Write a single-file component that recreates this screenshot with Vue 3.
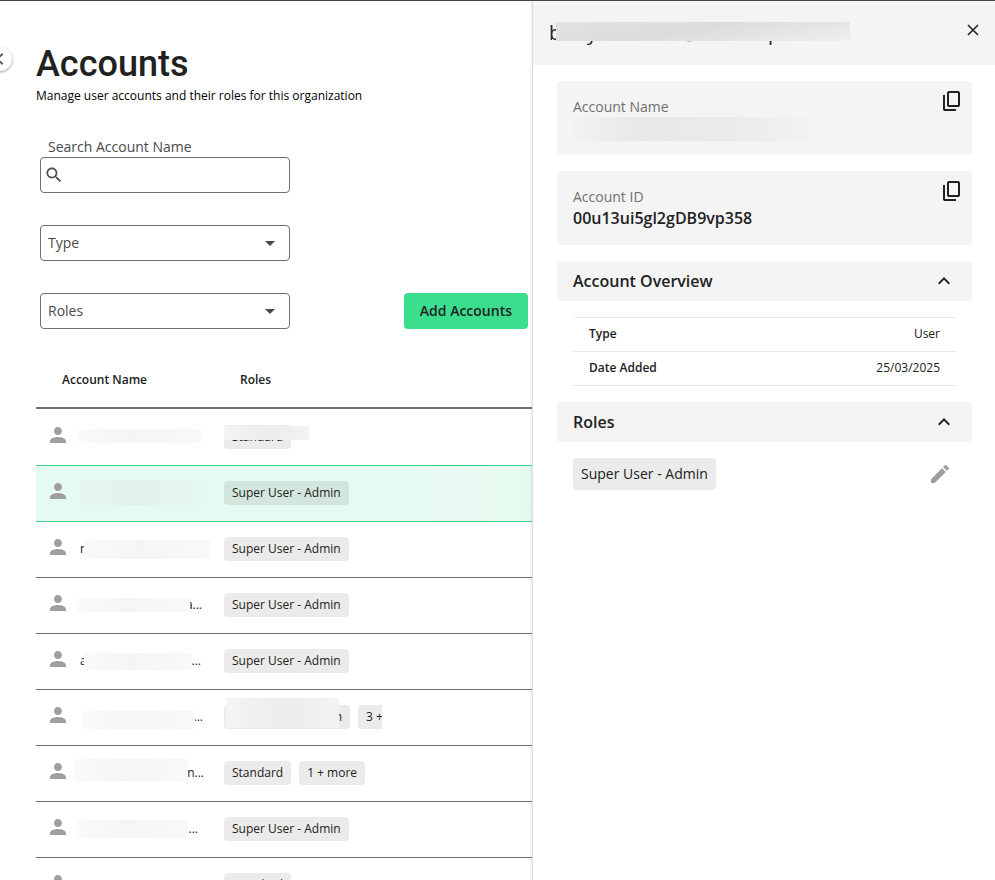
<script setup>
import { ref } from 'vue'

const searchText = ref('')
const typeFilter = ref('')
const roleFilter = ref('')
const overviewOpen = ref(true)
const rolesOpen = ref(true)

// names are private: only the edges of each one are shown around a cover
const accounts = ref([
  { id: 1, lead: '', tail: '', width: 122, cover: { left: -2, top: 0, width: 123, height: 14 }, roles: ['Standard'], roleCover: { left: 0, top: 1, width: 85, height: 14 } },
  { id: 2, lead: '', tail: '', width: 122, cover: { left: 1, top: -5, width: 121, height: 25 }, roles: ['Super User - Admin'] },
  { id: 3, lead: 'n', tail: '', width: 122, cover: { left: 4, top: -1, width: 126, height: 19 }, roles: ['Super User - Admin'] },
  { id: 4, lead: '', tail: 'a...', width: 122, cover: { left: -3, top: 1, width: 113, height: 14 }, roles: ['Super User - Admin'] },
  { id: 5, lead: 'a', tail: '...', width: 121, cover: { left: 4, top: 0, width: 108, height: 17 }, roles: ['Super User - Admin'] },
  { id: 6, lead: '', tail: '...', width: 123, cover: { left: 1, top: 2, width: 114, height: 18 }, roles: ['n', '3 + more'], roleCover: { left: 2, top: -7, width: 113, height: 30 } },
  { id: 7, lead: '', tail: 'n...', width: 124, cover: { left: -6, top: -6, width: 114, height: 22 }, roles: ['Standard', '1 + more'] },
  { id: 8, lead: '', tail: '...', width: 118, cover: { left: -3, top: -1, width: 111, height: 18 }, roles: ['Super User - Admin'] },
  { id: 9, lead: '', tail: '', width: 122, roles: ['Standard'] }
])

const selectedId = ref(2)

const details = [
  { label: 'Type', value: 'User' },
  { label: 'Date Added', value: '25/03/2025' }
]

function toBox(cover) {
  return {
    left: cover.left + 'px',
    top: cover.top + 'px',
    width: cover.width + 'px',
    height: cover.height + 'px'
  }
}
</script>

<template>
  <div class="app">
    <main class="page">
      <button class="collapse-btn" aria-label="Collapse menu">
        <svg viewBox="0 0 24 24"><path d="M15.41 7.41 14 6l-6 6 6 6 1.41-1.41L10.83 12z" /></svg>
      </button>

      <h1>Accounts</h1>
      <p class="subtitle">Manage user accounts and their roles for this organization</p>

      <div class="toolbar">
        <div class="filters">
          <div class="search">
            <label for="search">Search Account Name</label>
            <div class="search-box">
              <svg viewBox="0 0 24 24"><path d="M15.5 14h-.79l-.28-.27C15.41 12.59 16 11.11 16 9.5 16 5.91 13.09 3 9.5 3S3 5.91 3 9.5 5.91 16 9.5 16c1.61 0 3.09-.59 4.23-1.57l.27.28v.79l5 4.99L20.49 19zm-6 0C7.01 14 5 11.99 5 9.5S7.01 5 9.5 5 14 7.01 14 9.5 11.99 14 9.5 14" /></svg>
              <input id="search" v-model="searchText" type="text" />
            </div>
          </div>
          <div class="select-box">
            <select v-model="typeFilter" aria-label="Type">
              <option value="">Type</option>
            </select>
            <svg viewBox="0 0 24 24"><path d="m7 10 5 5 5-5z" /></svg>
          </div>
          <div class="select-box">
            <select v-model="roleFilter" aria-label="Roles">
              <option value="">Roles</option>
            </select>
            <svg viewBox="0 0 24 24"><path d="m7 10 5 5 5-5z" /></svg>
          </div>
        </div>
        <button class="add-btn">Add Accounts</button>
      </div>

      <table class="accounts">
        <thead>
          <tr>
            <th class="name-col">Account Name</th>
            <th class="roles-col">Roles</th>
          </tr>
        </thead>
        <tbody>
          <tr
            v-for="account in accounts"
            :key="account.id"
            :class="{ selected: account.id === selectedId }"
            @click="selectedId = account.id"
          >
            <td>
              <div class="account-cell">
                <svg class="person" viewBox="0 0 24 24"><path d="M12 12c2.21 0 4-1.79 4-4s-1.79-4-4-4-4 1.79-4 4 1.79 4 4 4m0 2c-2.67 0-8 1.34-8 4v2h16v-2c0-2.66-5.33-4-8-4" /></svg>
                <div class="name" :style="{ width: account.width + 'px' }">
                  <span>{{ account.lead }}</span>
                  <span>{{ account.tail }}</span>
                  <i v-if="account.cover" class="cover" :style="toBox(account.cover)"></i>
                </div>
              </div>
            </td>
            <td>
              <div class="role-cell">
                <div class="role-list">
                  <span v-for="role in account.roles" :key="role" :class="['chip', { wide: role === 'n' }]">{{ role }}</span>
                </div>
                <i v-if="account.roleCover" class="cover role-cover" :style="toBox(account.roleCover)"></i>
              </div>
            </td>
          </tr>
        </tbody>
      </table>
    </main>

    <aside class="drawer">
      <header class="drawer-header">
        <h2 class="drawer-title">
          <span>b</span><span>y</span><span>@</span><span>p</span>
          <i class="title-cover"></i>
        </h2>
        <button class="icon-btn" aria-label="Close">
          <svg viewBox="0 0 24 24"><path class="line" d="M7 7l10 10M17 7 7 17" /></svg>
        </button>
      </header>

      <div class="drawer-body">
        <section class="card">
          <div class="card-text">
            <span class="card-label">Account Name</span>
            <div class="value-cover"></div>
          </div>
          <button class="icon-btn" aria-label="Copy account name">
            <svg viewBox="0 0 24 24"><path d="M9 18q-.825 0-1.412-.587T7 16V4q0-.825.588-1.412T9 2h9q.825 0 1.413.588T20 4v12q0 .825-.587 1.413T18 18zm0-2h9V4H9zm-4 6q-.825 0-1.412-.587T3 20V6h2v14h11v2z" /></svg>
          </button>
        </section>

        <section class="card">
          <div class="card-text">
            <span class="card-label">Account ID</span>
            <strong class="card-value">00u13ui5gl2gDB9vp358</strong>
          </div>
          <button class="icon-btn" aria-label="Copy account ID">
            <svg viewBox="0 0 24 24"><path d="M9 18q-.825 0-1.412-.587T7 16V4q0-.825.588-1.412T9 2h9q.825 0 1.413.588T20 4v12q0 .825-.587 1.413T18 18zm0-2h9V4H9zm-4 6q-.825 0-1.412-.587T3 20V6h2v14h11v2z" /></svg>
          </button>
        </section>

        <button class="section-btn" :aria-expanded="overviewOpen" @click="overviewOpen = !overviewOpen">
          Account Overview
          <svg :class="{ closed: !overviewOpen }" viewBox="0 0 24 24"><path d="m12 8-6 6 1.41 1.41L12 10.83l4.59 4.58L18 14z" /></svg>
        </button>
        <table v-if="overviewOpen" class="details">
          <tbody>
            <tr v-for="item in details" :key="item.label">
              <th scope="row">{{ item.label }}</th>
              <td>{{ item.value }}</td>
            </tr>
          </tbody>
        </table>

        <button class="section-btn" :aria-expanded="rolesOpen" @click="rolesOpen = !rolesOpen">
          Roles
          <svg :class="{ closed: !rolesOpen }" viewBox="0 0 24 24"><path d="m12 8-6 6 1.41 1.41L12 10.83l4.59 4.58L18 14z" /></svg>
        </button>
        <div v-if="rolesOpen" class="role-row">
          <span class="chip large">Super User - Admin</span>
          <button class="icon-btn edit" aria-label="Edit roles">
            <svg viewBox="0 0 24 24"><path d="M3 17.25V21h3.75L17.81 9.94l-3.75-3.75zM20.71 7.04c.39-.39.39-1.02 0-1.41l-2.34-2.34a.996.996 0 0 0-1.41 0l-1.83 1.83 3.75 3.75z" /></svg>
          </button>
        </div>
      </div>
    </aside>
  </div>
</template>

<style>
body {
  margin: 0;
  background: #fff;
}
</style>

<style scoped>
* {
  box-sizing: border-box;
}

.app {
  display: grid;
  grid-template-columns: minmax(0, 1fr) 463px;
  height: 100vh;
  overflow: hidden;
  border-top: 1px solid #454345;
  font-family: "Open Sans", "Noto Sans", sans-serif;
  font-size: 12px;
  line-height: 16px;
  color: #212121;
}

button,
input,
select {
  font: inherit;
  color: inherit;
}

button {
  border: 0;
  padding: 0;
  background: none;
  cursor: pointer;
}

svg {
  display: block;
  flex: none;
  width: 24px;
  height: 24px;
  fill: currentColor;
}

/* left side */
.page {
  position: relative;
  padding: 41px 0 0 36px;
  overflow: hidden;
}

.collapse-btn {
  position: absolute;
  left: -12px;
  top: 46px;
  width: 24px;
  height: 24px;
  border-radius: 50%;
  background: #fff;
  color: #616161;
  box-shadow: 0 1px 3px rgba(0, 0, 0, 0.4);
}

h1 {
  margin: 0;
  font-family: Roboto, sans-serif;
  font-size: 36px;
  font-weight: 500;
  line-height: 44px;
}

.subtitle {
  margin: 2px 0 33px;
  color: #000;
}

.toolbar {
  display: flex;
  align-items: flex-end;
  justify-content: space-between;
  padding: 0 4px;
}

.filters {
  display: flex;
  flex-direction: column;
  gap: 32px;
  width: 250px;
  font-size: 14px;
  line-height: 20px;
  color: #4a4a4a;
}

.search label {
  display: block;
  padding-left: 8px;
}

.search-box,
.select-box {
  display: flex;
  align-items: center;
  height: 36px;
  border: 1px solid #6e6e6e;
  border-radius: 4px;
}

.search-box {
  padding-left: 3px;
}

.search-box svg {
  width: 20px;
  height: 20px;
}

.search-box input {
  flex: 1;
  min-width: 0;
  height: 32px;
  border: 0;
  outline: 0;
  background: none;
}

.select-box {
  position: relative;
}

.select-box select {
  width: 100%;
  height: 34px;
  padding: 0 32px 0 7px;
  border: 0;
  outline: 0;
  background: none;
  appearance: none;
}

.select-box svg {
  position: absolute;
  right: 7px;
  pointer-events: none;
}

.add-btn {
  height: 36px;
  padding: 0 16px;
  border-radius: 4px;
  background: #3bde8f;
  font-size: 14px;
  font-weight: 600;
}

.accounts {
  width: 100%;
  margin-top: 23px;
  border-collapse: separate;
  border-spacing: 0;
  table-layout: fixed;
}

.accounts th {
  height: 57px;
  padding: 0 0 0 16px;
  border-bottom: 2px solid #6e6e6e;
  font-weight: 600;
  text-align: left;
}

.accounts .name-col {
  width: 188px;
  padding-left: 26px;
}

.accounts td {
  height: 56px;
  padding: 0 0 1px;
  border-bottom: 1px solid #6e6e6e;
}

.accounts tbody tr:first-child td {
  height: 57px;
  padding: 0;
  border-bottom-color: #3bd08a;
}

.accounts .selected td {
  background: #e5faf1;
  border-bottom-color: #3bd08a;
}

.accounts .selected td:last-child {
  background: linear-gradient(90deg, #e5faf1 67%, #ebfbf4 68%, #e5faee);
}

.account-cell {
  display: flex;
  align-items: center;
  gap: 10px;
  padding-left: 10px;
}

.person {
  margin-bottom: 4px;
  color: #9e9e9e;
}

.name {
  position: relative;
  display: flex;
  justify-content: space-between;
  height: 16px;
}

.cover {
  position: absolute;
  background: linear-gradient(90deg, #f9fafa, #f4f5f5 45%, #f8f9f9);
}

.selected .cover {
  background: linear-gradient(90deg, #e4f7ee, #e1f2ea 45%, #e5f8f0);
}

.role-cell {
  position: relative;
}

.role-list {
  display: flex;
  gap: 8px;
  width: 158px;
  overflow: hidden;
}

.role-cover {
  background: linear-gradient(90deg, #f4f4f4, #ececec 55%, #f3f3f3);
}

.chip {
  flex: none;
  padding: 4px 8px;
  border-radius: 4px;
  background: #ebebeb;
  white-space: nowrap;
}

.chip.wide {
  width: 126px;
  text-align: right;
}

.selected .chip {
  background: #d3e6dd;
}

.chip.large {
  padding: 6px 8px;
  font-size: 14px;
  line-height: 20px;
}

/* right side */
.drawer {
  z-index: 1;
  border-left: 1px solid #dcdcdc;
  background: #fff;
  box-shadow: -1px 0 2px rgba(0, 0, 0, 0.08);
}

.drawer-header {
  display: flex;
  align-items: flex-start;
  justify-content: space-between;
  height: 64px;
  padding: 17px 10px 0 16px;
  background: #f4f4f4;
}

.drawer-title {
  position: relative;
  display: grid;
  grid-template-columns: 38px 94px 87px 1fr;
  width: 301px;
  margin: 0;
  font-size: 20px;
  font-weight: 400;
  line-height: 30px;
}

.title-cover {
  position: absolute;
  left: 7px;
  right: 0;
  top: 4px;
  height: 19px;
  background: linear-gradient(170deg, #e2e2e2, #dcdcdc 45%, #efefef);
}

.line {
  fill: none;
  stroke: currentColor;
  stroke-width: 1.6;
}

.drawer-body {
  display: flex;
  flex-direction: column;
  gap: 16px;
  padding: 16px 23px 0 24px;
}

.card {
  display: flex;
  align-items: flex-start;
  justify-content: space-between;
  height: 74px;
  padding: 8px 8px 0 16px;
  border-radius: 4px;
  background: #f4f4f4;
}

.card-text {
  display: flex;
  flex-direction: column;
  padding-top: 8px;
}

.card-label {
  font-size: 14px;
  line-height: 20px;
  color: #707070;
}

.card-value {
  font-size: 16px;
  font-weight: 600;
  line-height: 22px;
}

.value-cover {
  width: 236px;
  height: 24px;
  background: linear-gradient(90deg, #f2f2f2, #e8e8e8 28%, #ebebeb 70%, #f2f2f2);
}

.section-btn {
  display: flex;
  align-items: center;
  justify-content: space-between;
  height: 40px;
  padding: 0 16px;
  border-radius: 4px;
  background: #f4f4f4;
  font-size: 16px;
  font-weight: 600;
}

.closed {
  transform: rotate(180deg);
}

.details {
  margin: 0 16px;
  border-top: 1px solid #e8e8e8;
  border-spacing: 0;
}

.details th,
.details td {
  height: 34px;
  padding: 0 16px 2px;
  border-bottom: 1px solid #e8e8e8;
  text-align: left;
}

.details th {
  font-weight: 600;
}

.details td {
  text-align: right;
}

.role-row {
  display: flex;
  align-items: center;
  justify-content: space-between;
  padding: 0 20px 0 16px;
}

.edit {
  color: #9e9e9e;
}
</style>
